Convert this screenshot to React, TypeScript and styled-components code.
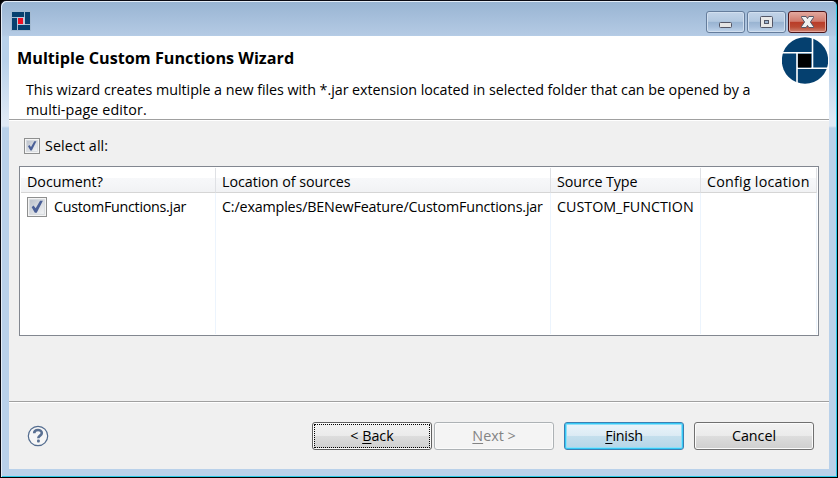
import React from "react";
import styled, { createGlobalStyle } from "styled-components";

const Global = createGlobalStyle`
  * { box-sizing: border-box; }
  html, body { margin: 0; padding: 0; background: #000; overflow: hidden; }
`;

const Frame = styled.div`
  width: 838px;
  height: 478px;
  display: flex;
  flex-direction: column;
  padding: 0 8px 8px 8px;
  border: 1px solid #0a0a12;
  border-right: 1px solid #000;
  border-bottom-color: #000;
  border-radius: 6px 6px 0 0;
  background: linear-gradient(#98b4d2 0, #b4cae4 34px, #b9d1ea 36px, #b9d1ea 60px, #dfe9f5 118px, #dfe9f5 125px, #b9d1ea 127px);
  box-shadow: inset 1px 1px 0 #e4edf7, inset -1px -1px 0 #2bc8e6;
  color: #000;
  font-family: "Open Sans", "Noto Sans", sans-serif;
  font-size: 14.3px;
  line-height: 20px;
`;

const TitleBar = styled.header`
  height: 35px;
  flex: none;
  display: flex;
  justify-content: space-between;
  padding: 10px 2px 0 2px;
`;

const Controls = styled.div`
  display: flex;
  gap: 2px;
  svg { display: block; }
`;

const Control = styled.div<{ $close?: boolean }>`
  width: 39px;
  height: 22px;
  border: 1px solid ${(p) => (p.$close ? "#4b1418" : "#657d9c")};
  border-radius: 3px;
  box-shadow: inset 0 0 0 1px ${(p) => (p.$close ? "#e5a69c" : "#d1dfef")};
  background: ${(p) =>
    p.$close
      ? "linear-gradient(#e2a99f 0, #d0796b 47%, #b93b27 50%, #bb4a34 75%, #cf8573 100%)"
      : "linear-gradient(#c3d4e8 0, #b2c8e0 47%, #98b3d1 50%, #a7bfdb 75%, #bfd4eb 100%)"};
`;

const Client = styled.main`
  flex: 1;
  display: flex;
  flex-direction: column;
  background: #f0f0f0;
`;

const Banner = styled.section`
  height: 84px;
  flex: none;
  display: flex;
  justify-content: space-between;
  background: #fff;
  border-bottom: 1px solid #a0a0a0;
  svg { display: block; margin: 1px 1px 0 0; flex: none; }
`;

const BannerText = styled.div`
  padding: 12px 0 0 8px;
  white-space: nowrap;
`;

const Text = styled.span<{ $ls?: number }>`
  letter-spacing: ${(p) => p.$ls ?? 0}px;
  white-space: nowrap;
`;

const Heading = styled.h1`
  margin: 0;
  font-size: 16.2px;
  line-height: 20px;
  font-weight: 700;
`;

const Description = styled.p`
  margin: 12px 0 0 9px;
`;

const Body = styled.section`
  height: 282px;
  flex: none;
  padding: 16px 10px 0;
  border-top: 1px solid #fff;
  border-bottom: 1px solid #a0a0a0;
`;

const SelectAll = styled.div`
  display: flex;
  align-items: center;
  gap: 5px;
  height: 17px;
  margin-left: 5px;
`;

const Box = styled.span<{ $size: number }>`
  width: ${(p) => p.$size}px;
  height: ${(p) => p.$size}px;
  flex: none;
  border: 1px solid #8e8f8f;
  padding: 1px;
  background: #f4f4f4;
  svg { display: block; width: 100%; height: 100%; }
`;

const Table = styled.div`
  width: 800px;
  height: 170px;
  margin-top: 12px;
  padding: 1px;
  display: grid;
  grid-template-columns: 195px 335px 150px 116px;
  border: 1px solid #828790;
  background: #fff;
`;

const Column = styled.div`
  border-right: 1px solid #ecf4fd;
`;

const HeadCell = styled.div`
  height: 25px;
  padding: 4px 0 0 6px;
  margin-right: -1px;
  border-right: 1px solid #dfe1e5;
  border-bottom: 1px solid #d5d5d5;
  background: linear-gradient(#fff 0, #fff 40%, #f7f8fa 42%, #f1f2f4 100%);
`;

const Cell = styled.div`
  height: 27px;
  padding-left: 6px;
  display: flex;
  align-items: center;
  gap: 7px;
`;

const Footer = styled.footer`
  flex: 1;
  display: flex;
  align-items: flex-start;
  padding: 19px 15px 0 18px;
  border-top: 1px solid #fff;
  svg { margin: 3px 263px 0 0; flex: none; }
`;

type Kind = "normal" | "focused" | "disabled" | "primary";

const Button = styled.button<{ $kind: Kind; $gap?: number }>`
  position: relative;
  width: 120px;
  height: 28px;
  flex: none;
  margin: 0 0 0 ${(p) => p.$gap ?? 0}px;
  padding: 0;
  font: inherit;
  line-height: 24px;
  border-radius: 3px;
  color: ${(p) => (p.$kind === "disabled" ? "#838383" : "#000")};
  border: 1px solid ${(p) => ({ normal: "#707070", focused: "#606060", disabled: "#adb2b5", primary: "#3c7fb1" })[p.$kind]};
  background: ${(p) =>
    p.$kind === "disabled"
      ? "#f4f4f4"
      : p.$kind === "primary"
        ? "linear-gradient(#eaf4fa 0, #dcebf4 48%, #c4dfed 50%, #b5d5e7 100%)"
        : "linear-gradient(#f2f2f2 0, #ebebeb 48%, #dddddd 50%, #cfcfcf 100%)"};
  box-shadow: ${(p) => (p.$kind === "primary" ? "inset 0 0 0 1px #35c9f6, inset 0 0 0 2px #8fdff8" : "inset 0 0 0 1px #fbfbfb")};
  &::after {
    content: "";
    display: ${(p) => (p.$kind === "focused" ? "block" : "none")};
    position: absolute;
    inset: 1px;
    border: 1px dotted #000;
  }
  u { text-decoration-thickness: 1px; text-underline-offset: 2px; }
`;

const Check = ({ size }: { size: number }) => (
  <Box $size={size}>
    <svg viewBox="0 0 12 12">
      <defs>
        <linearGradient id="well" x2="1" y2="1">
          <stop stopColor="#b9bfc9" />
          <stop offset="1" stopColor="#f5f6f7" />
        </linearGradient>
      </defs>
      <rect x="0.5" y="0.5" width="11" height="11" fill="url(#well)" stroke="#d3d7dd" strokeWidth=".7" />
      <path d="M2 6.2 3.4 4.9 5 7 8.3 1.3 10.4 1.3 5.8 10.4 4.4 10.4Z" fill="#4a5f97" />
    </svg>
  </Box>
);

const AppIcon = () => (
  <svg width="20" height="20" viewBox="0 0 20 20" shapeRendering="crispEdges">
    <path d="M0 0H20V20H0Z" fill="#a3bad2" />
    <path d="M1 1h12v5H1zM14 1h5v12h-5zM7 14h12v5H7zM1 7h5v12H1z" fill="#07406f" />
    <path d="M6 6h8v8H6z" fill="#b9cbdd" />
    <path d="M7 7h5v6H7z" fill="#ed1024" />
  </svg>
);

const Logo = () => (
  <svg width="46" height="47" viewBox="0 0 46 47">
    <circle cx="23" cy="23.5" r="23.2" fill="#05406f" />
    <path d="M30.5 0V31M0 15.8H30M15 16V47M15 31.3H46" stroke="#fff" strokeWidth="1.6" />
    <path d="M16 17H29V30.5H16Z" fill="#000" />
  </svg>
);

const columns = [
  { title: "Document?", value: "CustomFunctions.jar", check: true, hs: 0, vs: -0.27 },
  { title: "Location of sources", value: "C:/examples/BENewFeature/CustomFunctions.jar", hs: -0.05, vs: -0.16 },
  { title: "Source Type", value: "CUSTOM_FUNCTION", hs: -0.1, vs: 0 },
  { title: "Config location", value: "", hs: 0.22, vs: 0 },
];

export default function App() {
  return (
    <>
      <Global />
      <Frame>
        <TitleBar>
          <AppIcon />
          <Controls>
            <Control>
              <svg width="37" height="20"><rect x="12.5" y="10.5" width="12" height="5" rx="1" fill="#e4e4e4" stroke="#535666" /></svg>
            </Control>
            <Control>
              <svg width="37" height="20">
                <rect x="12.5" y="4.5" width="12" height="11" rx="1" fill="#e8e8e8" stroke="#535666" />
                <rect x="16.5" y="8.5" width="4" height="3" fill="#9cb4d0" stroke="#535666" />
              </svg>
            </Control>
            <Control $close>
              <svg width="37" height="20">
                <path d="M12.5 4.5H17.2L18.5 6.6 19.8 4.5H24.5V5.6L21.4 10 24.5 14.4V15.5H19.8L18.5 13.4 17.2 15.5H12.5V14.4L15.6 10 12.5 5.6Z" fill="#f0f0f0" stroke="#535666" strokeLinejoin="round" />
              </svg>
            </Control>
          </Controls>
        </TitleBar>
        <Client>
          <Banner>
            <BannerText>
              <Heading>Multiple Custom Functions Wizard</Heading>
              <Description>
                <Text $ls={-0.036}>This wizard creates multiple a new files with *.jar extension located in selected folder that can be opened by a</Text>
                <br />
                <Text $ls={0.11}>multi-page editor.</Text>
              </Description>
            </BannerText>
            <Logo />
          </Banner>
          <Body>
            <SelectAll>
              <Check size={16} />
              <Text $ls={0.1}>Select all:</Text>
            </SelectAll>
            <Table>
              {columns.map((c) => (
                <Column key={c.title}>
                  <HeadCell><Text $ls={c.hs}>{c.title}</Text></HeadCell>
                  <Cell>
                    {c.check && <Check size={20} />}
                    <Text $ls={c.vs}>{c.value}</Text>
                  </Cell>
                </Column>
              ))}
            </Table>
          </Body>
          <Footer>
            <svg width="22" height="22" viewBox="0 0 22 22">
              <circle cx="11" cy="11" r="9.7" fill="#f6f6f6" stroke="#536c8f" strokeWidth="1.2" />
              <path d="M7.2 8.2C7.2 3.9 14.8 4 14.8 8c0 2.6-3.4 2.6-3.5 5.2" fill="none" stroke="#5a7092" strokeWidth="2.6" />
              <rect x="10" y="14.6" width="2.8" height="2.8" rx="1" fill="#5a7092" />
            </svg>
            <Button $kind="focused"><Text>&lt; <u>B</u>ack</Text></Button>
            <Button $kind="disabled" $gap={2}><Text><u>N</u>ext &gt;</Text></Button>
            <Button $kind="primary" $gap={10}><Text $ls={-0.25}><u>F</u>inish</Text></Button>
            <Button $kind="normal" $gap={10}><Text>Cancel</Text></Button>
          </Footer>
        </Client>
      </Frame>
    </>
  );
}
